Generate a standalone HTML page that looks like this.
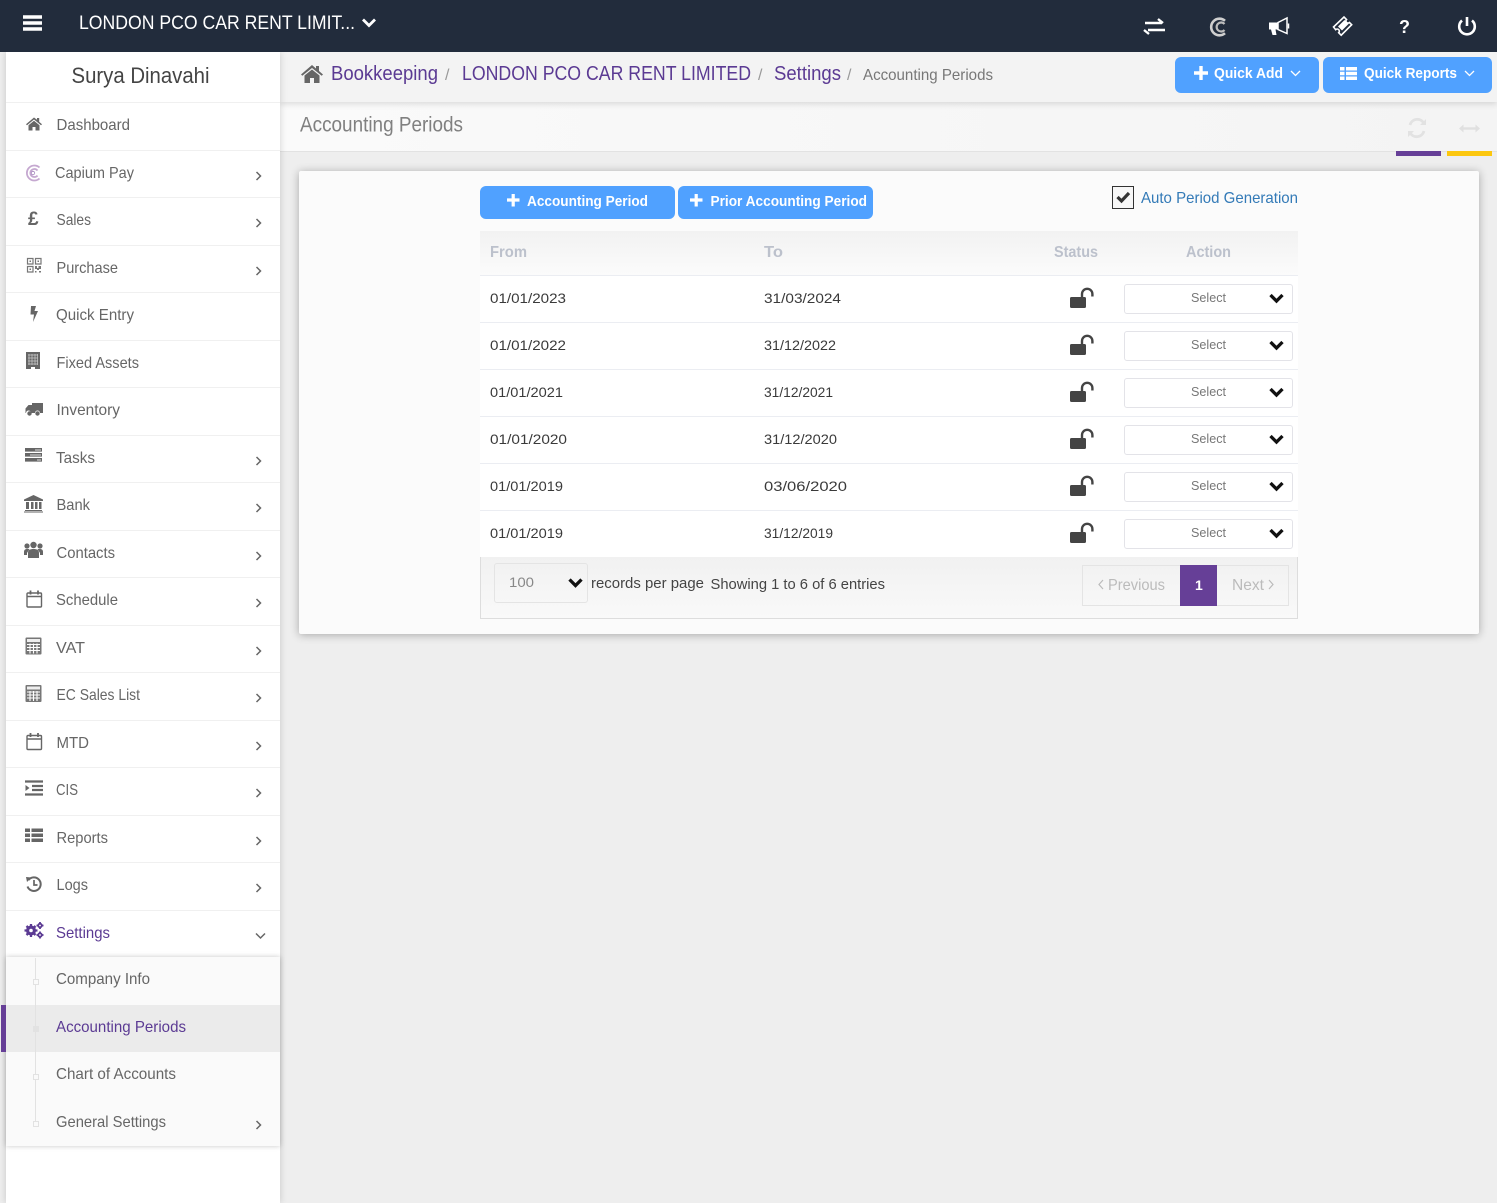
<!DOCTYPE html>
<html><head><meta charset="utf-8"><title>Accounting Periods</title>
<style>
html,body{margin:0;padding:0;width:1497px;height:1203px;overflow:hidden;background:#eee;font-family:"Liberation Sans",sans-serif}
.a{position:absolute;box-sizing:border-box}
svg.o{position:absolute;left:0;top:0;width:1497px;height:1203px}
text{font-family:"Liberation Sans",sans-serif}
.side text{font-size:16px;fill:#666}
.btn{background:#50a1ff;border-radius:6px}
.sel{left:1124px;width:169px;height:30px;background:#fff;border:1px solid #e3e3e8;border-radius:3px}
.ln{left:480px;width:818px;height:1px;background:#ebedf2}
.sb{left:6px;width:274px;height:1px;background:#f0f0f0}
.sq{left:33px;width:6px;height:6px;background:#fafafa;border:1px solid #e2e2e2}
</style></head><body>
<div class="a" style="left:0;top:52px;width:1497px;height:1151px;background:#eee"></div>
<div class="a" style="left:280px;top:102px;width:1217px;height:50px;background:linear-gradient(90deg,#fafafa,#f4f4f4);border-bottom:1px solid #e2e2e2"></div>
<div class="a" style="left:280px;top:52px;width:1217px;height:50px;background:#f3f3f3;box-shadow:0 2px 6px rgba(0,0,0,.13)"></div>
<div class="a" style="left:1396px;top:151px;width:45px;height:5px;background:#663f97"></div>
<div class="a" style="left:1447px;top:151px;width:45px;height:5px;background:#fcc70f"></div>
<div class="a" style="left:6px;top:52px;width:274px;height:1151px;background:#fff;box-shadow:0 0 7px rgba(0,0,0,.17)"></div>
<div class="a sb" style="top:102px"></div><div class="a sb" style="top:150px"></div><div class="a sb" style="top:197px"></div><div class="a sb" style="top:245px"></div><div class="a sb" style="top:292px"></div><div class="a sb" style="top:340px"></div><div class="a sb" style="top:387px"></div><div class="a sb" style="top:435px"></div><div class="a sb" style="top:482px"></div><div class="a sb" style="top:530px"></div><div class="a sb" style="top:577px"></div><div class="a sb" style="top:625px"></div><div class="a sb" style="top:672px"></div><div class="a sb" style="top:720px"></div><div class="a sb" style="top:767px"></div><div class="a sb" style="top:815px"></div><div class="a sb" style="top:862px"></div><div class="a sb" style="top:910px"></div>
<div class="a" style="left:6px;top:957px;width:274px;height:189px;background:#fafafa;box-shadow:0 0 5px rgba(0,0,0,.22)"></div>
<div class="a" style="left:6px;top:1005px;width:274px;height:47px;background:#ebebeb"></div>
<div class="a" style="left:1px;top:1005px;width:5px;height:47px;background:#663f97"></div>
<div class="a" style="left:35px;top:958px;width:1px;height:167px;background:#e2e2e2"></div>
<div class="a sq" style="top:979px"></div>
<div class="a sq" style="top:1026px;background:#e2e2e2;border-color:#e2e2e2"></div>
<div class="a sq" style="top:1074px"></div>
<div class="a sq" style="top:1121px"></div>
<div class="a" style="left:0;top:0;width:1497px;height:52px;background:#222c3c"></div>

<div class="a" style="left:299px;top:171px;width:1180px;height:463px;background:#fbfbfb;border-radius:2px;box-shadow:0 1px 9px rgba(0,0,0,.3)"></div>
<div class="a btn" style="left:1175px;top:57px;width:144px;height:36px"></div>
<div class="a btn" style="left:1323px;top:57px;width:169px;height:36px"></div>
<div class="a btn" style="left:480px;top:186px;width:195px;height:33px"></div>
<div class="a btn" style="left:678px;top:186px;width:195px;height:33px"></div>
<div class="a" style="left:1112px;top:186px;width:22px;height:23px;border:1px solid #333;background:#f7f7f7"></div>
<div class="a" style="left:480px;top:231px;width:818px;height:45px;background:linear-gradient(#f2f2f2,#fbfbfb);border-bottom:1px solid #ebedf2"></div>
<div class="a" style="left:480px;top:276px;width:818px;height:281px;background:#fff"></div>
<div class="a ln" style="top:322px"></div><div class="a ln" style="top:369px"></div><div class="a ln" style="top:416px"></div><div class="a ln" style="top:463px"></div><div class="a ln" style="top:510px"></div>
<div class="a sel" style="top:284px"></div><div class="a sel" style="top:331px"></div><div class="a sel" style="top:378px"></div><div class="a sel" style="top:425px"></div><div class="a sel" style="top:472px"></div><div class="a sel" style="top:519px"></div>
<div class="a" style="left:480px;top:557px;width:818px;height:62px;background:linear-gradient(#f1f1f1,#f9f9f9);border:1px solid #ddd;border-top:0"></div>
<div class="a" style="left:494px;top:563px;width:94px;height:40px;border:1px solid #e4e4e4;border-radius:3px"></div>
<div class="a" style="left:1082px;top:565px;width:207px;height:41px;border:1px solid #e4e4e4"></div>
<div class="a" style="left:1180px;top:565px;width:37px;height:41px;background:#663f97"></div>

<svg class="o" viewBox="0 0 1497 1203" xmlns="http://www.w3.org/2000/svg">
<defs>
<g id="lk"><rect x="0" y="9" width="16" height="11" rx="1.500" fill="#444"/><path d="M12 9V6a5.200 5.200 0 0 1 10.400 0V8.500" fill="none" stroke="#444" stroke-width="2.400"/></g>
<path id="dn" d="M1.500 1.500 7.500 7.500 13.500 1.500" fill="none" stroke="#111" stroke-width="3.300"/>
<path id="rt" d="M1 1 5 5 1 9" fill="none" stroke="#666" stroke-width="1.500"/>
<g id="cal" fill="none" stroke="#666"><rect x="1" y="3" width="14.500" height="14" rx="1" stroke-width="1.400"/><path d="M1 6.500h14.500" stroke-width="1.500"/><path d="M4.500 0.500v4M12 0.500v4" stroke-width="1.800"/></g>
<g id="calc"><rect x="0" y="0" width="16" height="17" rx="1" fill="#777"/><rect x="1.500" y="1.500" width="13" height="3" fill="#eee"/><path d="M1.500 7h13M1.500 10h13M1.500 13h13M4.500 6v10M8 6v10M11.500 6v10" stroke="#fff" stroke-width="1.100"/></g>
</defs>

<!-- top bar -->
<path d="M23 17h19M23 23h19M23 29h19" stroke="#fff" stroke-width="3.600"/>
<text x="79" y="29" font-size="19" fill="#fff" textLength="276" lengthAdjust="spacingAndGlyphs">LONDON PCO CAR RENT LIMIT...</text>
<path d="M363 19.500 369 25.500 375 19.500" fill="none" stroke="#fff" stroke-width="2.800"/>
<path d="M1145 23h17M1158 19l5 4M1165 30h-17M1149 34l-5-4" fill="none" stroke="#fff" stroke-width="2.400"/>
<path d="M1225 20.800a8.300 8.300 0 1 0 0 12.400" fill="none" stroke="#cfcfcf" stroke-width="2.600"/><path d="M1224.500 24a4.500 4.500 0 1 0 0 6" fill="none" stroke="#bdbdbd" stroke-width="2.200"/>
<path d="M1269 22.500h9v7h-2.500l1 5.500h-4l-1.500-5.500h-2z" fill="#fff"/><path d="M1278 22.500l9-4.500v15.500l-9-4z" fill="none" stroke="#fff" stroke-width="1.500"/><path d="M1288.500 23.500v5" stroke="#fff" stroke-width="1.500"/>
<path d="M1333.500 27l10.500-10 2.500 2.500a2 2 0 0 0 3 3l2.200 2.200-10.500 10.500-2.500-2.500a2 2 0 0 0-3-3z" fill="none" stroke="#fff" stroke-width="1.600"/><path d="M1338 26.500l6.500-6.500 4 4-6.500 6.500z" fill="#fff"/>
<text x="1399" y="33" font-size="18" font-weight="bold" fill="#fff">?</text>
<path d="M1462 20.500a7.800 7.800 0 1 0 10 0" fill="none" stroke="#fff" stroke-width="2.600"/><path d="M1467 17v9" stroke="#fff" stroke-width="2.600"/>

<!-- breadcrumb -->
<path d="M312 65 301 74.500l1.300 1.300L312 68l9.700 7.800 1.300-1.300-4-3.500v-5h-3v2.500zM312 69.500l-7.500 6V83h5.500v-5h4v5h5.500v-7.500z" fill="#666"/>
<g font-size="20" fill="#5b3a93">
<text x="331" y="80" textLength="107" lengthAdjust="spacingAndGlyphs">Bookkeeping</text>
<text x="462" y="80" textLength="289" lengthAdjust="spacingAndGlyphs">LONDON PCO CAR RENT LIMITED</text>
<text x="774" y="80" textLength="67" lengthAdjust="spacingAndGlyphs">Settings</text>
</g>
<g font-size="16" fill="#999"><text x="445" y="80">/</text><text x="758" y="80">/</text><text x="847" y="80">/</text></g>
<text x="863" y="80" font-size="16" fill="#777" textLength="130" lengthAdjust="spacingAndGlyphs">Accounting Periods</text>
<text x="300" y="131.500" font-size="21" fill="#808080" textLength="163" lengthAdjust="spacingAndGlyphs">Accounting Periods</text>

<!-- quick buttons -->
<path d="M1194 73h14M1201 66v14" stroke="#fff" stroke-width="3.400"/>
<text x="1214" y="78" font-size="15" font-weight="bold" fill="#fff" textLength="69" lengthAdjust="spacingAndGlyphs">Quick Add</text>
<path d="M1291 71l4.500 4.500 4.500-4.500" fill="none" stroke="#fff" stroke-width="1.300"/>
<path d="M1340 67h4.500v3.500h-4.500zM1346 67h11v3.500h-11zM1340 71.800h4.500v3.500h-4.500zM1346 71.800h11v3.500h-11zM1340 76.500h4.500V80h-4.500zM1346 76.500h11V80h-11z" fill="#fff"/>
<text x="1364" y="78" font-size="15" font-weight="bold" fill="#fff" textLength="93" lengthAdjust="spacingAndGlyphs">Quick Reports</text>
<path d="M1465 71l4.500 4.500 4.500-4.500" fill="none" stroke="#fff" stroke-width="1.300"/>
<!-- refresh, resize -->
<path d="M1424 123.500a7.500 7.500 0 0 0-14 1.500M1410 132.500a7.500 7.500 0 0 0 14-1.500" fill="none" stroke="#e2e2e2" stroke-width="2.800"/><path d="M1420 125h6v-6zM1414 131h-6v6z" fill="#e2e2e2"/>
<path d="M1462 128.500h15" stroke="#e0e0e0" stroke-width="2.400"/><path d="M1459 128.500l4.500-4v8zM1480 128.500l-4.500-4v8z" fill="#e0e0e0"/>

<!-- sidebar -->
<text x="71.500" y="83" font-size="22" fill="#444" textLength="138" lengthAdjust="spacingAndGlyphs">Surya Dinavahi</text>
<g class="side">
<text x="56.500" y="130" textLength="73.500" lengthAdjust="spacingAndGlyphs">Dashboard</text>
<text x="55" y="178" textLength="79" lengthAdjust="spacingAndGlyphs">Capium Pay</text>
<text x="56.500" y="225" textLength="34.500" lengthAdjust="spacingAndGlyphs">Sales</text>
<text x="56.500" y="273" textLength="61.500" lengthAdjust="spacingAndGlyphs">Purchase</text>
<text x="56" y="320" textLength="78" lengthAdjust="spacingAndGlyphs">Quick Entry</text>
<text x="56.500" y="368" textLength="82.500" lengthAdjust="spacingAndGlyphs">Fixed Assets</text>
<text x="56.500" y="415" textLength="63.500" lengthAdjust="spacingAndGlyphs">Inventory</text>
<text x="56" y="463" textLength="39" lengthAdjust="spacingAndGlyphs">Tasks</text>
<text x="56.500" y="510" textLength="33.500" lengthAdjust="spacingAndGlyphs">Bank</text>
<text x="56.500" y="558" textLength="58.500" lengthAdjust="spacingAndGlyphs">Contacts</text>
<text x="56" y="605" textLength="62" lengthAdjust="spacingAndGlyphs">Schedule</text>
<text x="56" y="653" textLength="29" lengthAdjust="spacingAndGlyphs">VAT</text>
<text x="56.500" y="700" textLength="83.500" lengthAdjust="spacingAndGlyphs">EC Sales List</text>
<text x="56.500" y="748" textLength="32.500" lengthAdjust="spacingAndGlyphs">MTD</text>
<text x="56" y="795" textLength="22" lengthAdjust="spacingAndGlyphs">CIS</text>
<text x="56.500" y="843" textLength="51.500" lengthAdjust="spacingAndGlyphs">Reports</text>
<text x="56.500" y="890" textLength="31.500" lengthAdjust="spacingAndGlyphs">Logs</text>
<text x="56" y="938" textLength="54" lengthAdjust="spacingAndGlyphs" style="fill:#5b3a93">Settings</text>
<text x="56" y="984" textLength="94" lengthAdjust="spacingAndGlyphs">Company Info</text>
<text x="56" y="1032" textLength="130" lengthAdjust="spacingAndGlyphs" style="fill:#5b3a93">Accounting Periods</text>
<text x="56" y="1079" textLength="120" lengthAdjust="spacingAndGlyphs">Chart of Accounts</text>
<text x="56" y="1127" textLength="110" lengthAdjust="spacingAndGlyphs">General Settings</text>
</g>
<use href="#rt" x="255.500" y="171"/><use href="#rt" x="255.500" y="218"/><use href="#rt" x="255.500" y="266"/><use href="#rt" x="255.500" y="456"/><use href="#rt" x="255.500" y="503"/><use href="#rt" x="255.500" y="551"/><use href="#rt" x="255.500" y="598"/><use href="#rt" x="255.500" y="646"/><use href="#rt" x="255.500" y="693"/><use href="#rt" x="255.500" y="741"/><use href="#rt" x="255.500" y="788"/><use href="#rt" x="255.500" y="836"/><use href="#rt" x="255.500" y="883"/><use href="#rt" x="255.500" y="1120"/>
<path d="M256 933.500l4.500 4.500 4.500-4.500" fill="none" stroke="#666" stroke-width="1.500"/>

<!-- sidebar icons -->
<path d="M34 117.500 26 124.300l1 1 7-5.800 7 5.800 1-1-2.800-2.400V118h-2.200v1.800zM34 120.800l-5.500 4.500v5.200h4v-3.500h3v3.500h4v-5.200z" fill="#666"/>
<path d="M39.500 167.500a7.500 7.500 0 1 0 0 11M37.500 170.500a4 4 0 1 0 0 5" fill="none" stroke="#c5a8d0" stroke-width="1.800"/><circle cx="33" cy="173" r="1.700" fill="none" stroke="#a98ac0" stroke-width=".8"/>
<text x="28" y="225" font-size="19" font-weight="bold" fill="#666">£</text>
<path d="M27.500 258.500h5.500v5.500h-5.500zM35.500 258.500h5.500v5.500h-5.500zM27.500 266.500h5.500v5.500h-5.500z" fill="none" stroke="#777" stroke-width="1.200"/><path d="M29.500 260.500h1.500v1.500h-1.500zM37.500 260.500h1.500v1.500h-1.500zM29.500 268.500h1.500v1.500h-1.500zM35 266h2v2h1.500v-2h2.500v3h-2v1h-2v-1h-2zM35 271h1.500v1.500H35zM39 271h2v1.500h-2z" fill="#777"/>
<path d="M31 306h5l-1.500 5h3.500l-5 11 1-7.500h-3.500z" fill="#666"/>
<path d="M26 352h14v17h-5v-2h-4v2h-5z" fill="#666"/><path d="M28 355h10M28 358h10M28 361h10M28 364h10M29 354v11M32 354v11M35 354v11M37.500 354v11" stroke="#ccc" stroke-width=".7"/>
<path d="M32 403h11v10h-3a2.500 2.500 0 0 0-5 0h-4a2.500 2.500 0 0 0-5 0h-.5v-4.500l3-3.500H32z" fill="#666"/><circle cx="29.500" cy="413.500" r="2.200" fill="#666"/><circle cx="37.500" cy="413.500" r="2.200" fill="#666"/>
<path d="M25 448h17v3.600H25zM25 453h17v3.600H25zM25 458h17v3.600H25z" fill="#666"/><path d="M35 450h6M30 455h11M37 460h4" stroke="#ddd" stroke-width=".9"/>
<path d="M33.500 495 24 499.500v1.500h19v-1.500zM26 502h3v7h-3zM31 502h2.500v7H31zM35 502h2.500v7H35zM39 502h2.500v7H39zM25 510h17v1H25zM24 511.500h19v1H24z" fill="#666"/>
<circle cx="33.500" cy="545" r="3.200" fill="#666"/><circle cx="27" cy="546" r="2.600" fill="#666"/><circle cx="40" cy="546" r="2.600" fill="#666"/><path d="M28 558v-5c0-3 2-4 5.500-4s5.500 1 5.500 4v5zM24 555v-3c0-2 1-3 3-3h2.500L27 553v2zM43 555v-3c0-2-1-3-3-3h-2.500l2.500 4v2z" fill="#666"/>
<use href="#cal" x="26" y="590"/>
<use href="#calc" x="25.500" y="637.500"/>
<use href="#calc" x="25.500" y="685"/>
<use href="#cal" x="26" y="732.500"/>
<path d="M25 781.500h18M32 786h11M32 790h11M25 794.500h18" stroke="#666" stroke-width="2.200"/><path d="M25.500 785v6l4-3z" fill="#666"/>
<path d="M25 828.500h5v3.500h-5zM31.500 828.500H43v3.500H31.500zM25 833.500h5v3.500h-5zM31.500 833.500H43v3.500H31.500zM25 838.500h5v3.500h-5zM31.500 838.500H43v3.500H31.500z" fill="#666"/>
<path d="M28.500 880a6.800 6.800 0 1 1 -1 6.500" fill="none" stroke="#666" stroke-width="2"/><path d="M26 877l5.500.5-4.500 4.500z" fill="#666"/><path d="M34 880v5h3.500" fill="none" stroke="#666" stroke-width="1.700"/>
<g fill="#5b3a93"><circle cx="31" cy="930.500" r="5"/><path d="M31 924v13M24.500 930.500h13M26.500 926l9 9M35.500 926l-9 9" stroke="#5b3a93" stroke-width="2.300"/><circle cx="31" cy="930.500" r="1.800" fill="#fff"/></g>
<g fill="none" stroke="#5b3a93" stroke-width="1.800"><circle cx="40" cy="925.500" r="1.800"/><circle cx="40" cy="935" r="1.800"/><path d="M40 922v1M40 928v1M36.500 925.500h1M42.500 925.500h1M40 931.500v1M40 937.500v1M36.500 935h1M42.500 935h1"/></g>

<!-- action buttons -->
<path d="M507 200h12.500M513.200 194v12.500" stroke="#fff" stroke-width="3.200"/>
<text x="527" y="206" font-size="15" font-weight="bold" fill="#fff" textLength="121" lengthAdjust="spacingAndGlyphs">Accounting Period</text>
<path d="M690 200h12.500M696.200 194v12.500" stroke="#fff" stroke-width="3.200"/>
<text x="710.500" y="206" font-size="15" font-weight="bold" fill="#fff" textLength="156.500" lengthAdjust="spacingAndGlyphs">Prior Accounting Period</text>
<path d="M1117.500 197l4 4 7.500-8" fill="none" stroke="#333" stroke-width="3.200"/>
<text x="1141" y="203" font-size="16" fill="#337ab7" textLength="157" lengthAdjust="spacingAndGlyphs">Auto Period Generation</text>

<!-- table -->
<g font-size="16" font-weight="bold" fill="#bcc1cc">
<text x="490" y="257" textLength="37" lengthAdjust="spacingAndGlyphs">From</text>
<text x="764" y="257" textLength="19" lengthAdjust="spacingAndGlyphs">To</text>
<text x="1054" y="257" textLength="44" lengthAdjust="spacingAndGlyphs">Status</text>
<text x="1186" y="257" textLength="45" lengthAdjust="spacingAndGlyphs">Action</text>
</g>
<g font-size="14" fill="#3a3a3a">
<text x="490" y="303" textLength="76" lengthAdjust="spacingAndGlyphs">01/01/2023</text><text x="764" y="303" textLength="77" lengthAdjust="spacingAndGlyphs">31/03/2024</text>
<text x="490" y="350" textLength="76" lengthAdjust="spacingAndGlyphs">01/01/2022</text><text x="764" y="350" textLength="72" lengthAdjust="spacingAndGlyphs">31/12/2022</text>
<text x="490" y="397" textLength="73" lengthAdjust="spacingAndGlyphs">01/01/2021</text><text x="764" y="397" textLength="69" lengthAdjust="spacingAndGlyphs">31/12/2021</text>
<text x="490" y="444" textLength="77" lengthAdjust="spacingAndGlyphs">01/01/2020</text><text x="764" y="444" textLength="73" lengthAdjust="spacingAndGlyphs">31/12/2020</text>
<text x="490" y="491" textLength="73" lengthAdjust="spacingAndGlyphs">01/01/2019</text><text x="764" y="491" textLength="83" lengthAdjust="spacingAndGlyphs">03/06/2020</text>
<text x="490" y="538" textLength="73" lengthAdjust="spacingAndGlyphs">01/01/2019</text><text x="764" y="538" textLength="69" lengthAdjust="spacingAndGlyphs">31/12/2019</text>
</g>
<use href="#lk" x="1070" y="288"/><use href="#lk" x="1070" y="335"/><use href="#lk" x="1070" y="382"/><use href="#lk" x="1070" y="429"/><use href="#lk" x="1070" y="476"/><use href="#lk" x="1070" y="523"/>
<g font-size="13" fill="#777">
<text x="1191" y="302" textLength="35" lengthAdjust="spacingAndGlyphs">Select</text>
<text x="1191" y="349" textLength="35" lengthAdjust="spacingAndGlyphs">Select</text>
<text x="1191" y="396" textLength="35" lengthAdjust="spacingAndGlyphs">Select</text>
<text x="1191" y="443" textLength="35" lengthAdjust="spacingAndGlyphs">Select</text>
<text x="1191" y="490" textLength="35" lengthAdjust="spacingAndGlyphs">Select</text>
<text x="1191" y="537" textLength="35" lengthAdjust="spacingAndGlyphs">Select</text>
</g>
<use href="#dn" x="1269" y="293.500"/><use href="#dn" x="1269" y="340.500"/><use href="#dn" x="1269" y="387.500"/><use href="#dn" x="1269" y="434.500"/><use href="#dn" x="1269" y="481.500"/><use href="#dn" x="1269" y="528.500"/>

<!-- footer -->
<text x="509" y="587" font-size="14" fill="#888" textLength="25" lengthAdjust="spacingAndGlyphs">100</text>
<use href="#dn" x="568" y="578"/>
<text x="591" y="588" font-size="15" fill="#444" textLength="113" lengthAdjust="spacingAndGlyphs">records per page</text>
<text x="710.500" y="589" font-size="15" fill="#444" textLength="174.500" lengthAdjust="spacingAndGlyphs">Showing 1 to 6 of 6 entries</text>
<path d="M1103 580l-4 4.500 4 4.500" fill="none" stroke="#bbb" stroke-width="1.200"/>
<text x="1108" y="590" font-size="16" fill="#bbb" textLength="57" lengthAdjust="spacingAndGlyphs">Previous</text>
<text x="1195" y="590" font-size="14" font-weight="bold" fill="#fff">1</text>
<text x="1232" y="590" font-size="16" fill="#bbb" textLength="32" lengthAdjust="spacingAndGlyphs">Next</text>
<path d="M1269 580l4 4.500-4 4.500" fill="none" stroke="#bbb" stroke-width="1.200"/>
</svg>
</body></html>
